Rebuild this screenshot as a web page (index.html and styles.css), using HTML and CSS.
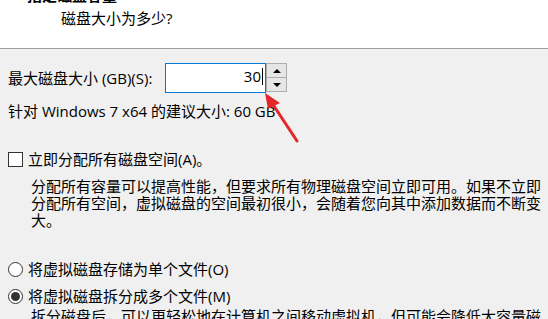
FILE: index.html
```html
<!DOCTYPE html>
<html lang="zh-CN">
<head>
  <meta charset="UTF-8" />
  <title>新建虚拟机向导</title>
  <link rel="stylesheet" href="styles.css">
</head>
<body>
  <div class="wizard-head">
    <div class="wizard-title">指定磁盘容量</div>
    <div class="wizard-sub">磁盘大小为多少?</div>
  </div>

  <div class="wizard-body">
    <div class="size-row">
      <label class="size-label">最大磁盘大小 (GB)(S):</label>
      <div class="spin">
        <div class="spin-field">30<span class="caret"></span></div>
        <div class="spin-btns">
          <div class="spin-btn"><span class="tri-up"></span></div>
          <div class="spin-btn"><span class="tri-down"></span></div>
        </div>
      </div>
    </div>
    <div class="hint">针对 Windows 7 x64 的建议大小: 60 GB</div>

    <div class="opt opt-first">
      <span class="checkbox"></span>
      <span>立即分配所有磁盘空间(A)。</span>
    </div>
    <div class="desc">分配所有容量可以提高性能，但要求所有物理磁盘空间立即可用。如果不立即分配所有空间，虚拟磁盘的空间最初很小，会随着您向其中添加数据而不断变大。</div>

    <div class="opt opt-group">
      <span class="radio"></span>
      <span>将虚拟磁盘存储为单个文件(O)</span>
    </div>
    <div class="opt opt-next">
      <span class="radio on"></span>
      <span>将虚拟磁盘拆分成多个文件(M)</span>
    </div>
    <div class="desc desc-tight">拆分磁盘后，可以更轻松地在计算机之间移动虚拟机，但可能会降低大容量磁盘的性能。</div>
  </div>

  <!-- annotation arrow pointing at the size field -->
  <svg class="arrow" width="45" height="60" viewBox="0 0 45 60">
    <line x1="12" y1="15" x2="37" y2="53" stroke="#e5262b" stroke-width="3" stroke-linecap="round" />
    <polygon points="5,5 20,15 8,21" fill="#e5262b" />
  </svg>
</body>
</html>
```

FILE: styles.css
```css
* {
  box-sizing: border-box;
}

body {
  margin: 0;
  height: 319px;
  overflow: hidden;
  background: #f0f0f0;
  color: #000;
  font-family: "Open Sans", "Noto Sans CJK SC", sans-serif;
  font-size: 15px;
  line-height: 17px;
}

.wizard-head {
  height: 49px;
  background: #fff;
  border-bottom: 1px solid #a0a0a0;
  overflow: hidden;
}

.wizard-title {
  margin-top: -13px;
  padding-left: 27px;
  font-weight: bold;
}

.wizard-sub {
  margin-top: 6px;
  padding-left: 61px;
}

.wizard-body {
  padding: 14px 0 0 8px;
}

.size-row {
  display: flex;
  align-items: center;
}

.size-label {
  width: 157px;
}

.spin {
  display: flex;
}

.spin-field {
  width: 101px;
  height: 30px;
  background: #fff;
  border: 1px solid #0078d7;
  display: flex;
  justify-content: flex-end;
  align-items: center;
  padding: 0 2px 4px 0;
}

.caret {
  width: 1px;
  height: 17px;
  margin-left: 1px;
  background: #000;
}

.spin-btns {
  width: 21px;
  height: 29px;
  display: flex;
  flex-direction: column;
}

.spin-btn {
  flex: 1;
  background: #e6e6e6;
  border: 1px solid #adadad;
  display: flex;
  justify-content: center;
  align-items: center;
}

.spin-btn + .spin-btn {
  border-top: none;
}

.tri-up,
.tri-down {
  width: 0;
  height: 0;
  border-left: 4px solid transparent;
  border-right: 4px solid transparent;
}

.tri-up {
  border-bottom: 4px solid #000;
}

.tri-down {
  border-top: 4px solid #000;
}

.hint {
  margin-top: 10px;
}

.opt {
  display: flex;
  align-items: center;
  gap: 5px;
}

.opt-first {
  margin-top: 31px;
}

.opt-group {
  margin-top: 32px;
}

.opt-next {
  margin-top: 10px;
}

.checkbox,
.radio {
  width: 15px;
  height: 15px;
  flex: none;
  background: #fff;
  border: 1px solid #333;
}

.radio {
  border-radius: 50%;
  display: flex;
  justify-content: center;
  align-items: center;
}

.radio.on::after {
  content: '';
  width: 9px;
  height: 9px;
  border-radius: 50%;
  background: #333;
}

.desc {
  margin-top: 10px;
  padding-left: 23px;
  width: 534px;
}

.desc-tight {
  margin-top: 3px;
}

.arrow {
  position: absolute;
  left: 260px;
  top: 88px;
}
```
